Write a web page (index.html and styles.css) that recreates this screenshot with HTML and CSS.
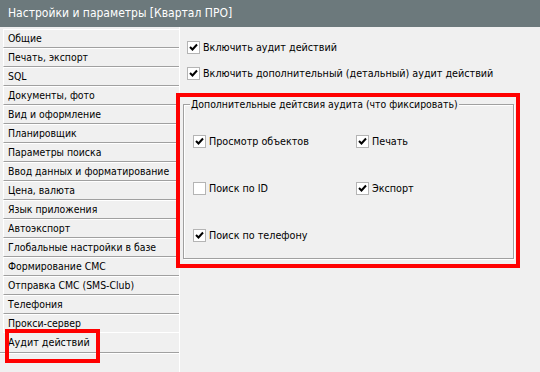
FILE: index.html
```html
<!DOCTYPE html>
<html lang="ru">
<head>
  <meta charset="UTF-8">
  <title>Настройки и параметры</title>
  <link rel="stylesheet" href="styles.css">
</head>
<body>
  <div class="titlebar">Настройки и параметры [Квартал ПРО]</div>

  <div class="window">
    <ul class="nav">
      <li>Общие</li>
      <li>Печать, экспорт</li>
      <li>SQL</li>
      <li>Документы, фото</li>
      <li>Вид и оформление</li>
      <li>Планировщик</li>
      <li>Параметры поиска</li>
      <li>Ввод данных и форматирование</li>
      <li>Цена, валюта</li>
      <li>Язык приложения</li>
      <li>Автоэкспорт</li>
      <li>Глобальные настройки в базе</li>
      <li>Формирование СМС</li>
      <li>Отправка СМС (SMS-Club)</li>
      <li>Телефония</li>
      <li class="before-active">Прокси-сервер</li>
      <li class="active">Аудит действий<span class="mark"></span></li>
    </ul>

    <div class="content">
      <label class="check">
        <span class="box"><svg viewBox="0 0 11 11"><polyline points="2,5 4.5,7.5 9,2.5"/></svg></span>
        Включить аудит действий
      </label>
      <label class="check">
        <span class="box"><svg viewBox="0 0 11 11"><polyline points="2,5 4.5,7.5 9,2.5"/></svg></span>
        Включить дополнительный (детальный) аудит действий
      </label>

      <div class="highlight">
        <fieldset class="group">
          <legend>Дополнительные дейтсвия аудита (что фиксировать)</legend>
          <div class="group-grid">
            <label class="check">
              <span class="box"><svg viewBox="0 0 11 11"><polyline points="2,5 4.5,7.5 9,2.5"/></svg></span>
              Просмотр объектов
            </label>
            <label class="check">
              <span class="box"><svg viewBox="0 0 11 11"><polyline points="2,5 4.5,7.5 9,2.5"/></svg></span>
              Печать
            </label>
            <label class="check">
              <span class="box"></span>
              Поиск по ID
            </label>
            <label class="check">
              <span class="box"><svg viewBox="0 0 11 11"><polyline points="2,5 4.5,7.5 9,2.5"/></svg></span>
              Экспорт
            </label>
            <label class="check">
              <span class="box"><svg viewBox="0 0 11 11"><polyline points="2,5 4.5,7.5 9,2.5"/></svg></span>
              Поиск по телефону
            </label>
          </div>
        </fieldset>
      </div>
    </div>
  </div>
</body>
</html>
```

FILE: styles.css
```css
body {
  margin: 0;
  height: 372px;
  display: flex;
  flex-direction: column;
  background: #f0f0f0;
  color: #000;
  font-family: "DejaVu Sans Condensed", "Liberation Sans", sans-serif;
  font-size: 10.7px;
}

.titlebar {
  height: 27px;
  line-height: 26px;
  padding-left: 8px;
  background: #6c797c;
  color: #fff;
  font-size: 12px;
}

.window {
  flex: 1;
  display: flex;
}

/* left list of sections */
.nav {
  list-style: none;
  margin: 0;
  padding: 2px 0 0 3px;
  width: 176px;
  flex: none;
  border-right: 1px solid #fff;
  font-size: 10.4px;
}

.nav li {
  height: 19px;
  box-sizing: border-box;
  line-height: 17px;
  padding-left: 4px;
  border-top: 1px solid #fff;
  border-left: 1px solid #fff;
  border-bottom: 1px solid #a0a0a0;
  white-space: nowrap;
  overflow: hidden;
}

.nav li.before-active {
  border-bottom-color: #fff;
}

.nav li.active {
  position: relative;
  overflow: visible;
  margin-left: -3px;
  padding-left: 8px;
  border: none;
  border-bottom: 1px solid #a0a0a0;
  box-shadow: 0 1px 0 #fff;
  height: 20px;
  line-height: 20px;
  font-size: 10.7px;
}

.mark {
  position: absolute;
  left: 5px;
  top: -4px;
  width: 95px;
  height: 34px;
  box-sizing: border-box;
  border: 4px solid #ff0000;
}

/* right side */
.content {
  flex: 1;
  padding: 14px 0 0 7px;
}

.check {
  display: flex;
  align-items: center;
  gap: 3px;
  height: 13px;
  line-height: 13px;
  white-space: nowrap;
}

.content > .check + .check {
  margin-top: 13px;
}

.box {
  width: 13px;
  height: 13px;
  box-sizing: border-box;
  flex: none;
  background: #fff;
  border: 1px solid #b4b4b4;
}

.box svg {
  display: block;
  width: 11px;
  height: 11px;
  fill: none;
  stroke: #000;
  stroke-width: 2;
}

.highlight {
  margin: 13px 0 0 -11px;
  width: 344px;
  box-sizing: border-box;
  border: 4px solid #ff0000;
  padding: 0 2px 5px 3px;
}

.group {
  margin: 0;
  padding: 0 0 16px 0;
  border: 1px solid #a0a0a0;
  box-shadow: 1px 1px 0 #fff, inset 1px 1px 0 #fff;
}

.group legend {
  margin-left: 6px;
  padding: 0 1px;
  line-height: 14px;
  font-size: 10.4px;
  background: #f0f0f0;
}

.group-grid {
  display: grid;
  grid-template-columns: 163px 1fr;
  grid-auto-rows: 13px;
  row-gap: 34px;
  padding: 24px 0 0 9px;
}
```
